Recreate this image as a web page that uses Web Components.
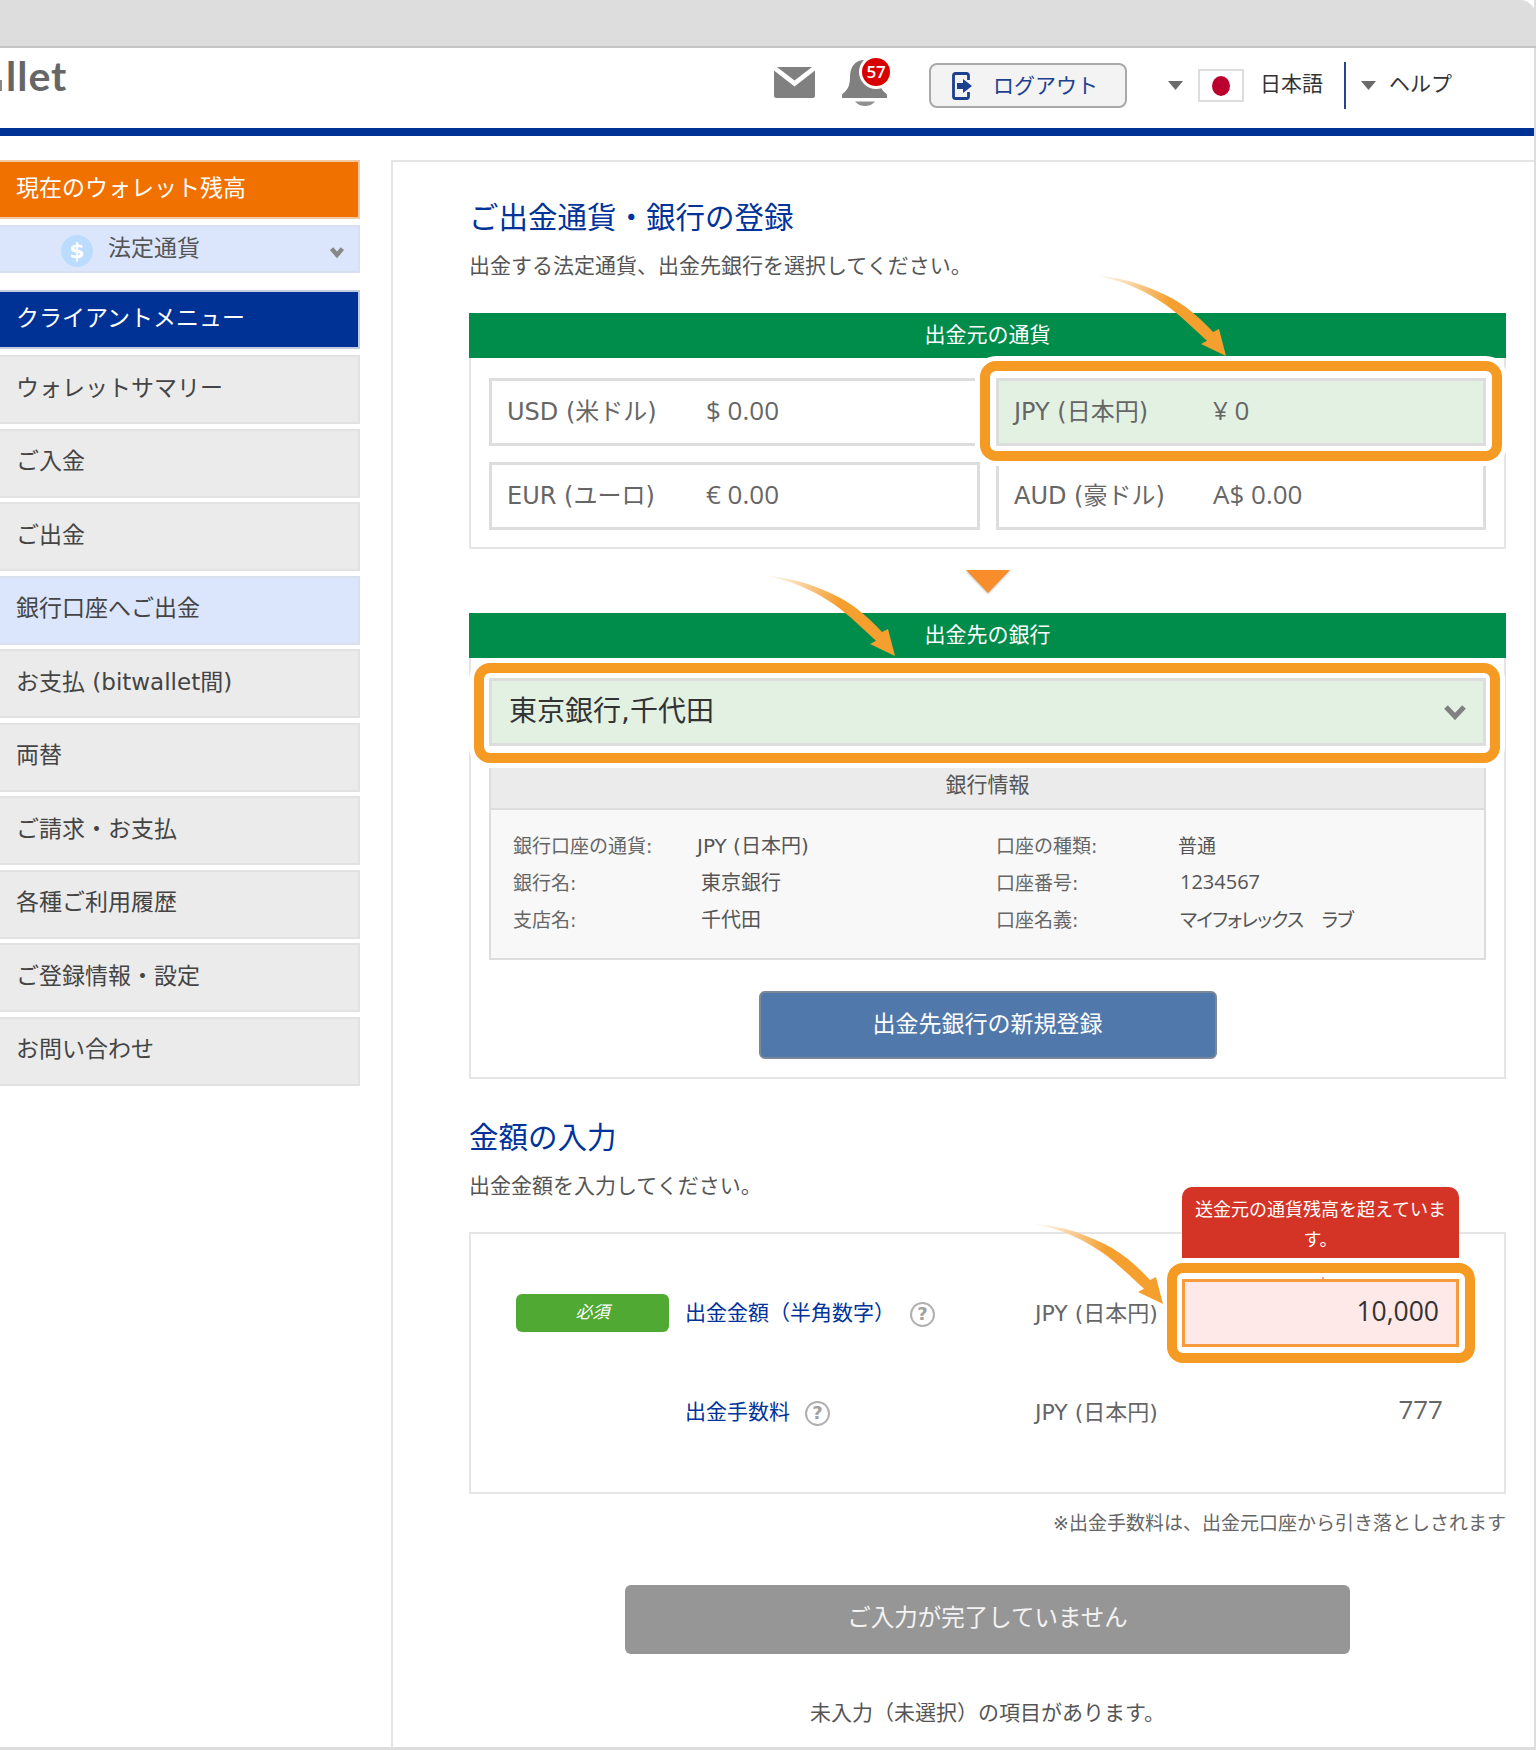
<!DOCTYPE html>
<html lang="ja">
<head>
<meta charset="utf-8">
<title>bitwallet</title>
<style>
html,body{margin:0;padding:0;background:#fff}
body{width:1536px;height:1750px;overflow:hidden;font-family:"DejaVu Sans","Noto Sans CJK JP",sans-serif;color:#555}
</style>
</head>
<body>
<bw-app>
  <bw-titlebar></bw-titlebar>
  <bw-header></bw-header>
  <bw-layout>
    <bw-sidebar slot="side">
      <bw-nav variant="orange">現在のウォレット残高</bw-nav>
      <bw-fiat>法定通貨</bw-fiat>
      <bw-nav variant="blue">クライアントメニュー</bw-nav>
      <bw-nav>ウォレットサマリー</bw-nav>
      <bw-nav>ご入金</bw-nav>
      <bw-nav>ご出金</bw-nav>
      <bw-nav variant="active">銀行口座へご出金</bw-nav>
      <bw-nav>お支払 (bitwallet間)</bw-nav>
      <bw-nav>両替</bw-nav>
      <bw-nav>ご請求・お支払</bw-nav>
      <bw-nav>各種ご利用履歴</bw-nav>
      <bw-nav>ご登録情報・設定</bw-nav>
      <bw-nav>お問い合わせ</bw-nav>
    </bw-sidebar>
    <bw-main slot="main">
      <bw-heading first sub="出金する法定通貨、出金先銀行を選択してください。">ご出金通貨・銀行の登録</bw-heading>

      <bw-panel heading="出金元の通貨" style="--panel-h:236px">
        <bw-arrow style="left:627px;top:-39px"></bw-arrow>
        <bw-currencies>
          <bw-cell code="USD (米ドル)" amount="$ 0.00"></bw-cell>
          <bw-cell code="JPY (日本円)" amount="¥ 0" selected></bw-cell>
          <bw-cell code="EUR (ユーロ)" amount="€ 0.00"></bw-cell>
          <bw-cell code="AUD (豪ドル)" amount="A$ 0.00"></bw-cell>
        </bw-currencies>
      </bw-panel>

      <bw-down></bw-down>

      <bw-panel heading="出金先の銀行" style="--panel-h:466px">
        <bw-arrow style="left:296px;top:-39px"></bw-arrow>
        <bw-select>東京銀行,千代田</bw-select>
        <bw-bankinfo></bw-bankinfo>
        <bw-button tone="blue">出金先銀行の新規登録</bw-button>
      </bw-panel>

      <bw-heading sub="出金金額を入力してください。">金額の入力</bw-heading>

      <bw-panel style="--panel-h:262px">
        <bw-arrow style="left:564px;top:-10px"></bw-arrow>
        <bw-amounts></bw-amounts>
      </bw-panel>

      <bw-note>※出金手数料は、出金元口座から引き落としされます</bw-note>
      <bw-button tone="gray">ご入力が完了していません</bw-button>
      <bw-foot>未入力（未選択）の項目があります。</bw-foot>
    </bw-main>
  </bw-layout>
</bw-app>

<script>
class Base extends HTMLElement{
  connectedCallback(){
    if(this.shadowRoot) return;
    const root=this.attachShadow({mode:"open"});
    const t=document.createElement("template");
    t.innerHTML=`<style>${this.constructor.css}</style>${this.render()}`;
    root.appendChild(t.content.cloneNode(true));
  }
  render(){return "<slot></slot>"}
}
const chevron=(w,h,sw,c)=>`<svg width="${w}" height="${h}" viewBox="0 0 ${w} ${h}" style="display:block"><polyline points="${sw*.6},${sw*.6} ${w/2},${h-sw*.7} ${w-sw*.6},${sw*.6}" fill="none" stroke="${c}" stroke-width="${sw}"/></svg>`;
const caret=()=>`<svg width="15" height="9" viewBox="0 0 15 9" style="display:block"><polygon points="0,0 15,0 7.5,9" fill="#6a6a6a"/></svg>`;

class BwApp extends Base{
  static css=`:host{display:flex;flex-direction:column;width:1534px;height:1750px;border-right:2px solid #ddd;background:#fff;box-sizing:content-box;position:relative}`;
}
class BwTitlebar extends Base{
  static css=`:host{display:block;height:46px;margin-right:-2px;background:#ddd;border-bottom:2px solid #c6c6c6;border-top-right-radius:16px}`;
  render(){return ""}
}
class BwHeader extends Base{
  static css=`
  :host{display:flex;align-items:flex-start;height:80px;border-bottom:8px solid #003296;background:#fff;color:#333}
  .logo{position:relative;box-sizing:border-box;width:67px;padding-left:6px;white-space:nowrap;margin-top:5px;font-family:Lato,sans-serif;font-size:41px;line-height:46px;font-weight:700;color:#666;letter-spacing:1px}
  .logo i{position:absolute;left:0;top:27px;width:2px;height:11px;background:#888}
  .mail{margin:19px 0 0 707px;display:block}
  .bell{position:relative;margin:12px 0 0 27px;width:45px;height:46px}
  .bell svg{display:block}
  .badge{position:absolute;left:20px;top:-2px;width:28px;height:28px;border-radius:50%;background:#d90000;box-shadow:0 0 0 3px #fff;color:#fff;font-family:"Open Sans",sans-serif;font-size:17px;font-weight:600;line-height:28px;text-align:center;letter-spacing:-.3px}
  .logout{margin:15px 0 0 42px;width:198px;height:45px;box-sizing:border-box;border:2px solid #a9a9a9;border-radius:8px;background:#f3f3f3;display:flex;align-items:center;padding-left:21px;color:#1c3f8e;font-size:21px;gap:20px}
  .logout svg{display:block;flex:none}
  .logout span{margin-top:-4px}
  .c1{margin:33px 0 0 41px}
  .flag{margin:21px 0 0 15px;width:46px;height:33px;box-sizing:border-box;border:2px solid #ddd;display:flex;align-items:center;justify-content:center}
  .flag i{display:block;width:18px;height:20px;border-radius:50%;background:#bc002d}
  .lang{margin:16px 0 0 16px;width:84px;font-size:21px;line-height:40px;white-space:nowrap}
  .div{margin-top:14px;width:2px;height:47px;background:#24468f}
  .c2{margin:33px 0 0 15px}
  .help{margin:16px 0 0 13px;font-size:21px;line-height:40px;white-space:nowrap}`;
  render(){return `
  <div class="logo"><i></i>llet</div>
  <svg class="mail" width="41" height="31" viewBox="0 0 41 31"><path d="M3 0H38L20.5 13.5Z" fill="#808080"/><path d="M0 3.5L20.5 19.5L41 3.5V28.5Q41 31 38.5 31H2.5Q0 31 0 28.5Z" fill="#808080"/></svg>
  <div class="bell">
    <svg width="45" height="46" viewBox="0 0 45 46"><path d="M22.5 0C13 0 8 7 8 17C8 25 6 30 .8 33.6Q0 34.5 0 36V38H45V36Q45 34.5 44.2 33.6C39 30 37 25 37 17C37 7 32 0 22.5 0Z" fill="#808080"/><path d="M13 41.5H33Q29 46 23 46Q17 46 13 41.5Z" fill="#909090"/></svg>
    <div class="badge">57</div>
  </div>
  <div class="logout">
    <svg width="21" height="28" viewBox="0 0 21 28"><path d="M16.5 8V3.5Q16.5 1.5 14.5 1.5H3.5Q1.5 1.5 1.5 3.5V24.5Q1.5 26.5 3.5 26.5H14.5Q16.5 26.5 16.5 24.5V20" fill="none" stroke="#1c3f8e" stroke-width="2.8"/><path d="M5 11H11V7L20 14L11 21V17H5Z" fill="#1c3f8e"/></svg>
    <span>ログアウト</span>
  </div>
  <div class="c1">${caret()}</div>
  <div class="flag"><i></i></div>
  <div class="lang">日本語</div>
  <div class="div"></div>
  <div class="c2">${caret()}</div>
  <div class="help">ヘルプ</div>`}
}
class BwLayout extends Base{
  static css=`:host{display:flex;flex:1;padding-top:24px;gap:31px;min-height:0;border-bottom:3px solid #ddd;overflow:hidden}`;
  render(){return `<slot name="side"></slot><slot name="main"></slot>`}
}
class BwSidebar extends Base{
  static css=`:host{display:flex;flex-direction:column;width:360px;flex:none}`;
}
class BwNav extends Base{
  static css=`
  :host{display:flex;align-items:center;box-sizing:border-box;height:69px;margin-bottom:4.5px;padding:0 0 8px 16px;background:#ebebeb;border:2px solid #e2e2e2;border-left:0;font-size:23px;color:#444;white-space:nowrap}
  :host([variant=orange]){height:59px;margin-bottom:6px;background:#f07000;color:#fff;border-color:#f3c9a3}
  :host([variant=blue]){height:59px;margin-bottom:6px;background:#003296;color:#fff;border-color:#c3cde2}
  :host([variant=active]){background:#dbe6fd;border-color:#d8dfee}`;
}
class BwFiat extends Base{
  static css=`
  :host{display:flex;align-items:center;box-sizing:border-box;height:48px;margin-bottom:17px;padding:0 13px 0 61px;background:#dbe6fd;border:2px solid #d8dfee;border-left:0;font-size:23px;color:#555;gap:15px}
  .coin{width:32px;height:32px;border-radius:50%;background:#bbdcff;color:#fff;font-weight:700;font-size:22px;line-height:32px;text-align:center;margin-top:4px}
  .t{line-height:32px;margin-top:-3px}
  .chev{margin-left:auto;margin-top:6px}`;
  render(){return `<div class="coin">$</div><div class="t"><slot></slot></div><div class="chev">${chevron(16,12,4.4,"#888")}</div>`}
}
class BwMain extends Base{
  static css=`:host{display:block;flex:1;box-sizing:border-box;border:2px solid #e5e5e5;border-width:2px 0 0 2px;padding:0 28px 0 76px;background:#fff;min-width:0}`;
}
class BwHeading extends Base{
  static css=`
  :host{display:block;margin-top:39px}
  :host([first]){margin-top:36px}
  h2{margin:0;font-size:29.5px;line-height:40px;font-weight:400;color:#003399;white-space:nowrap}
  p{margin:13px 0 31px;font-size:21px;line-height:30px;color:#555;white-space:nowrap}
  :host([first]) p{margin-bottom:32px}`;
  render(){return `<h2><slot></slot></h2><p>${this.getAttribute("sub")||""}</p>`}
}
class BwPanel extends Base{
  static css=`
  :host{display:block;position:relative;box-sizing:border-box;height:var(--panel-h);border:2px solid #e5e5e5}
  .h{margin:-2px -2px 0;height:45px;background:#008c4a;color:#fff;text-align:center;font-size:21px;line-height:44px}`;
  render(){const h=this.getAttribute("heading");return `${h?`<div class="h">${h}</div>`:""}<slot></slot>`}
}
class BwArrow extends Base{
  static css=`:host{display:block;position:absolute;width:135px;height:85px;z-index:5;pointer-events:none} svg{display:block}`;
  render(){const id="g"+Math.random().toString(36).slice(2);return `<svg width="135" height="85" viewBox="0 0 135 85"><defs><linearGradient id="${id}" gradientUnits="userSpaceOnUse" x1="0" y1="0" x2="72" y2="24"><stop offset="0" stop-color="#fbe3c4" stop-opacity=".35"/><stop offset=".55" stop-color="#f9c98c"/><stop offset="1" stop-color="#f59f2e"/></linearGradient></defs><path d="M0 0C30 2 55 12 77 24C92 33 104 44 115 56L121 53L128 80L103 68L109 64.7C96 53 82 39 68 29C50 17 28 5 0 0Z" fill="url(#${id})"/></svg>`}
}
class BwCurrencies extends Base{
  static css=`:host{display:grid;grid-template-columns:491px 490px;column-gap:16px;row-gap:16px;padding:20px 0 0 18px;position:relative}`;
}
class BwCell extends Base{
  static css=`
  :host{display:flex;align-items:center;position:relative;box-sizing:border-box;height:68px;border:3px solid #ddd;padding:0 0 5px 15px;font-size:24px;color:#666;white-space:nowrap}
  :host([selected]){background:#e3f1e3;z-index:2}
  .c{width:199px}
  .a{font-family:"Open Sans",sans-serif;font-size:26px}
  .ring{position:absolute;left:-19px;right:-19px;top:-20px;bottom:-18px;border:10px solid #f59a23;border-radius:16px;box-shadow:0 0 0 5px #fff;pointer-events:none}`;
  render(){return `<span class="c">${this.getAttribute("code")}</span><span class="a">${this.getAttribute("amount")}</span>${this.hasAttribute("selected")?'<div class="ring"></div>':""}`}
}
class BwDown extends Base{
  static css=`:host{display:flex;justify-content:center;height:64px;padding-top:20px;box-sizing:border-box}`;
  render(){return `<svg width="46" height="26" viewBox="0 0 46 26"><polygon points="1,1 45,1 23,24" fill="#f78e2b" style="filter:drop-shadow(0 1px 1px #bbb)"/></svg>`}
}
class BwSelect extends Base{
  static css=`
  :host{display:flex;align-items:center;position:relative;box-sizing:border-box;height:68px;margin:20px 18px 0;padding:0 17px 6px 17px;background:#e3f1e3;border:3px solid #ddd;font-size:28px;color:#333;white-space:nowrap}
  .ch{margin-left:auto;margin-right:-1px;margin-top:6px}
  .ring{position:absolute;left:-18px;right:-17px;top:-18px;bottom:-20px;border:10px solid #f59a23;border-radius:16px;box-shadow:0 0 0 5px #fff;pointer-events:none}`;
  render(){return `<slot></slot><div class="ch">${chevron(24,16,5,"#808080")}</div><div class="ring"></div>`}
}
class BwBankinfo extends Base{
  static css=`
  :host{display:block;margin:22px 18px 0;position:relative;z-index:0;font-size:19px;color:#666}
  .h{height:42px;background:#ebebeb;border:2px solid #ddd;border-top:0;box-sizing:border-box;text-align:center;line-height:34px;font-size:21px;color:#555}
  .b{display:grid;box-sizing:border-box;height:150px;background:#f8f8f8;border:2px solid #ddd;border-top:0;padding:16px 0 0 22px;grid-template-columns:184px 299px 182px 1fr;grid-auto-rows:37px;align-items:center;white-space:nowrap}
  .v{color:#555;font-size:20px}.s{padding-left:4px}.s2{padding-left:2px}
  .n{font-family:"Open Sans",sans-serif}
  .p{font-feature-settings:"palt";font-size:19px;letter-spacing:-.8px}
  .j{font-size:19px}`;
  render(){return `<div class="h">銀行情報</div><div class="b">
  <span>銀行口座の通貨:</span><span class="v">JPY (日本円)</span><span>口座の種類:</span><span class="v j">普通</span>
  <span>銀行名:</span><span class="v s">東京銀行</span><span>口座番号:</span><span class="v s2 n">1234567</span>
  <span>支店名:</span><span class="v s">千代田</span><span>口座名義:</span><span class="v s2 p">マイフォレックス　ラブ</span></div>`}
}
class BwButton extends Base{
  static css=`
  :host{display:flex;align-items:center;justify-content:center;box-sizing:border-box;color:#fff;white-space:nowrap;font-size:23px;border-radius:6px}
  :host([tone=blue]){width:458px;height:68px;margin:31px auto 0;background:#5178ab;border:2px solid #7b8898;padding-bottom:6px}
  :host([tone=gray]){width:725px;height:69px;margin:48px auto 0;background:#969696;padding-bottom:7px;color:#f3f3f3;font-size:23.5px}`;
}
class BwHelp extends Base{
  static css=`:host{display:inline-block;box-sizing:border-box;width:25px;height:25px;border:2.5px solid #b0b0b0;border-radius:50%;color:#a0a0a0;font-size:18px;line-height:20px;text-align:center;font-weight:700}`;
  render(){return "?"}
}
class BwAmounts extends Base{
  static css=`
  :host{display:grid;grid-template-columns:153px 366px 147px 277px;grid-template-rows:68px 68px;row-gap:31px;padding:45px 0 0 45px;align-items:center;font-size:21px;white-space:nowrap}
  .badge{height:38px;background:#50a932;border-radius:6px;color:#fff;font-size:17px;font-style:italic;text-align:center;line-height:36px}
  .lab{padding-left:16px;color:#003399;margin-top:-4px;display:flex;align-items:center}
  .lab bw-help{margin-left:15px;margin-top:6px}
  .cur{color:#666;margin-top:-4px;font-size:22px}
  .box{position:relative;align-self:stretch;box-sizing:border-box;background:#fee8e8;border:3px solid #f79b3d;display:flex;align-items:center;justify-content:flex-end;padding-right:17px;font-family:"Open Sans",sans-serif;font-size:26.5px;color:#333}
  .box span{margin-top:-4px}
  .box b{position:absolute;left:137px;top:-5px;width:2px;height:2px;background:#f5a78a}
  .ring{position:absolute;left:-18px;right:-19px;top:-19px;bottom:-19px;border:10px solid #f59a23;border-radius:16px;pointer-events:none}
  .tip{position:absolute;left:-3px;right:-3px;bottom:calc(100% + 24px);height:71px;box-sizing:border-box;background:#d43426;border-radius:10px 10px 0 0;color:#fff;font-family:"DejaVu Sans","Noto Sans CJK JP",sans-serif;font-size:18px;line-height:30px;padding:8px 12px 0;text-align:center;white-space:normal;z-index:3}
  .fee{text-align:right;font-family:"Open Sans",sans-serif;font-size:26px;padding-right:16px;color:#666;margin-top:-6px}`;
  render(){return `
  <div class="badge">必須</div><div class="lab">出金金額（半角数字）<bw-help></bw-help></div><div class="cur">JPY (日本円)</div>
  <div class="box"><div class="ring"></div><b></b><div class="tip">送金元の通貨残高を超えています。</div><span>10,000</span></div>
  <div></div><div class="lab">出金手数料<bw-help></bw-help></div><div class="cur">JPY (日本円)</div><div class="fee">777</div>`}
}
class BwNote extends Base{
  static css=`:host{display:block;margin-top:15px;text-align:right;font-size:19px;line-height:28px;color:#666;white-space:nowrap}`;
}
class BwFoot extends Base{
  static css=`:host{display:block;margin-top:44px;text-align:center;font-size:21px;line-height:30px;color:#555;white-space:nowrap}`;
}
const defs={"bw-app":BwApp,"bw-titlebar":BwTitlebar,"bw-header":BwHeader,"bw-layout":BwLayout,"bw-sidebar":BwSidebar,"bw-nav":BwNav,"bw-fiat":BwFiat,"bw-main":BwMain,"bw-heading":BwHeading,"bw-panel":BwPanel,"bw-arrow":BwArrow,"bw-currencies":BwCurrencies,"bw-cell":BwCell,"bw-down":BwDown,"bw-select":BwSelect,"bw-bankinfo":BwBankinfo,"bw-button":BwButton,"bw-help":BwHelp,"bw-amounts":BwAmounts,"bw-note":BwNote,"bw-foot":BwFoot};
for(const k in defs) customElements.define(k,defs[k]);
</script>
</body>
</html>
